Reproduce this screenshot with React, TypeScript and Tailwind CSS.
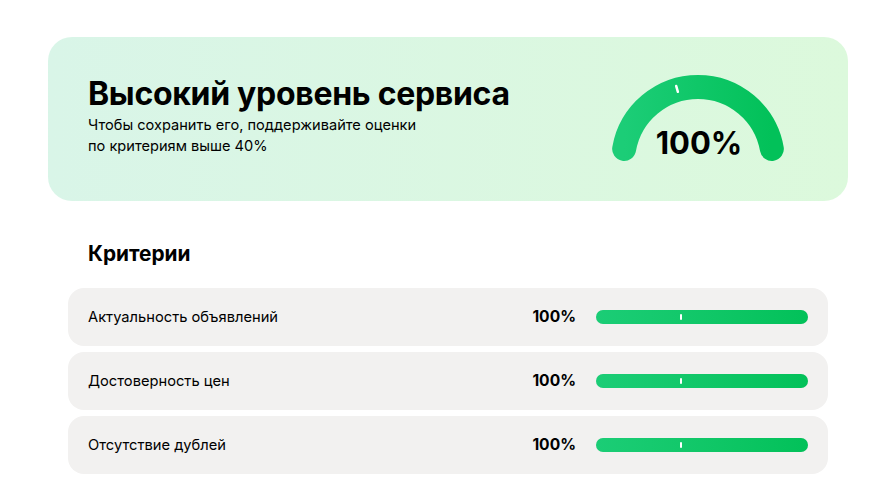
import React from 'react'

const criteria = [
  { name: 'Актуальность объявлений', value: 100 },
  { name: 'Достоверность цен', value: 100 },
  { name: 'Отсутствие дублей', value: 100 },
]

const THRESHOLD = 40

function Gauge({ value }: { value: number }) {
  // arc from 190deg to 350deg (svg angles, 0 = right, going clockwise)
  const cx = 88
  const cy = 88
  const r = 75
  const start = 190
  const end = 350
  const pt = (deg: number, rad: number) => {
    const a = (deg * Math.PI) / 180
    return [cx + rad * Math.cos(a), cy + rad * Math.sin(a)]
  }
  const [sx, sy] = pt(start, r)
  const [ex, ey] = pt(start + ((end - start) * value) / 100, r)
  const tickDeg = start + ((end - start) * THRESHOLD) / 100
  const [t1x, t1y] = pt(tickDeg, r - 2)
  const [t2x, t2y] = pt(tickDeg, r + 4)
  return (
    <svg width="176" height="102" viewBox="0 0 176 102">
      <defs>
        <linearGradient id="g" x1="0" y1="0" x2="1" y2="0">
          <stop offset="0" stopColor="#1ccd77" />
          <stop offset="1" stopColor="#02c159" />
        </linearGradient>
      </defs>
      <path
        d={`M ${sx} ${sy} A ${r} ${r} 0 0 1 ${ex} ${ey}`}
        fill="none"
        stroke="url(#g)"
        strokeWidth="24"
        strokeLinecap="round"
      />
      <line x1={t1x} y1={t1y} x2={t2x} y2={t2y} stroke="#fff" strokeWidth="2.5" strokeLinecap="round" />
      <text
        x="89"
        y="80"
        textAnchor="middle"
        fontSize="31"
        fontWeight="700"
        fill="#000"
        style={{ fontFamily: 'Inter, sans-serif' }}
      >
        {value}%
      </text>
    </svg>
  )
}

function Bar({ value }: { value: number }) {
  return (
    <div className="relative h-[14px] w-[212px] rounded-full bg-[#e2e2e2]">
      <div
        className="h-full rounded-full bg-gradient-to-r from-[#1bcd76] to-[#02c159]"
        style={{ width: `${value}%` }}
      />
      <div
        className="absolute top-[4px] h-[6px] w-[2px] rounded-[1px] bg-white"
        style={{ left: `${(212 * THRESHOLD) / 100 - 1}px` }}
      />
    </div>
  )
}

export default function App() {
  return (
    <div className="min-h-screen bg-white pt-[37px] text-black" style={{ fontFamily: 'Inter, "Noto Sans", sans-serif' }}>
      <div className="ml-[48px] w-[800px]">
        <div className="flex h-[164px] items-center justify-between rounded-[24px] bg-gradient-to-r from-[#d9f5e8] to-[#dcf9dc] pl-[40px] pr-[62px]">
          <div className="-mt-[8px]">
            <h1 className="text-[32px] font-bold leading-[40px] tracking-[-0.3px]">Высокий уровень сервиса</h1>
            <p className="mt-[1px] text-[14.6px] leading-[21px]">
              Чтобы сохранить его, поддерживайте оценки
              <br />
              по критериям выше 40%
            </p>
          </div>
          <div className="mt-[12px]">
            <Gauge value={100} />
          </div>
        </div>

        <div className="px-[20px]">
          <h2 className="mt-[39px] pl-[20px] text-[20.8px] font-bold leading-[28px]">Критерии</h2>
          <div className="mt-[20px] flex flex-col gap-[6px]">
            {criteria.map((c) => (
              <div key={c.name} className="flex h-[58px] items-center rounded-[16px] bg-[#f2f1f0] px-[20px]">
                <span className="flex-1 text-[14.7px]">{c.name}</span>
                <span className="mr-[20px] text-[15.6px] font-bold">{c.value}%</span>
                <Bar value={c.value} />
              </div>
            ))}
          </div>
        </div>
      </div>
    </div>
  )
}
